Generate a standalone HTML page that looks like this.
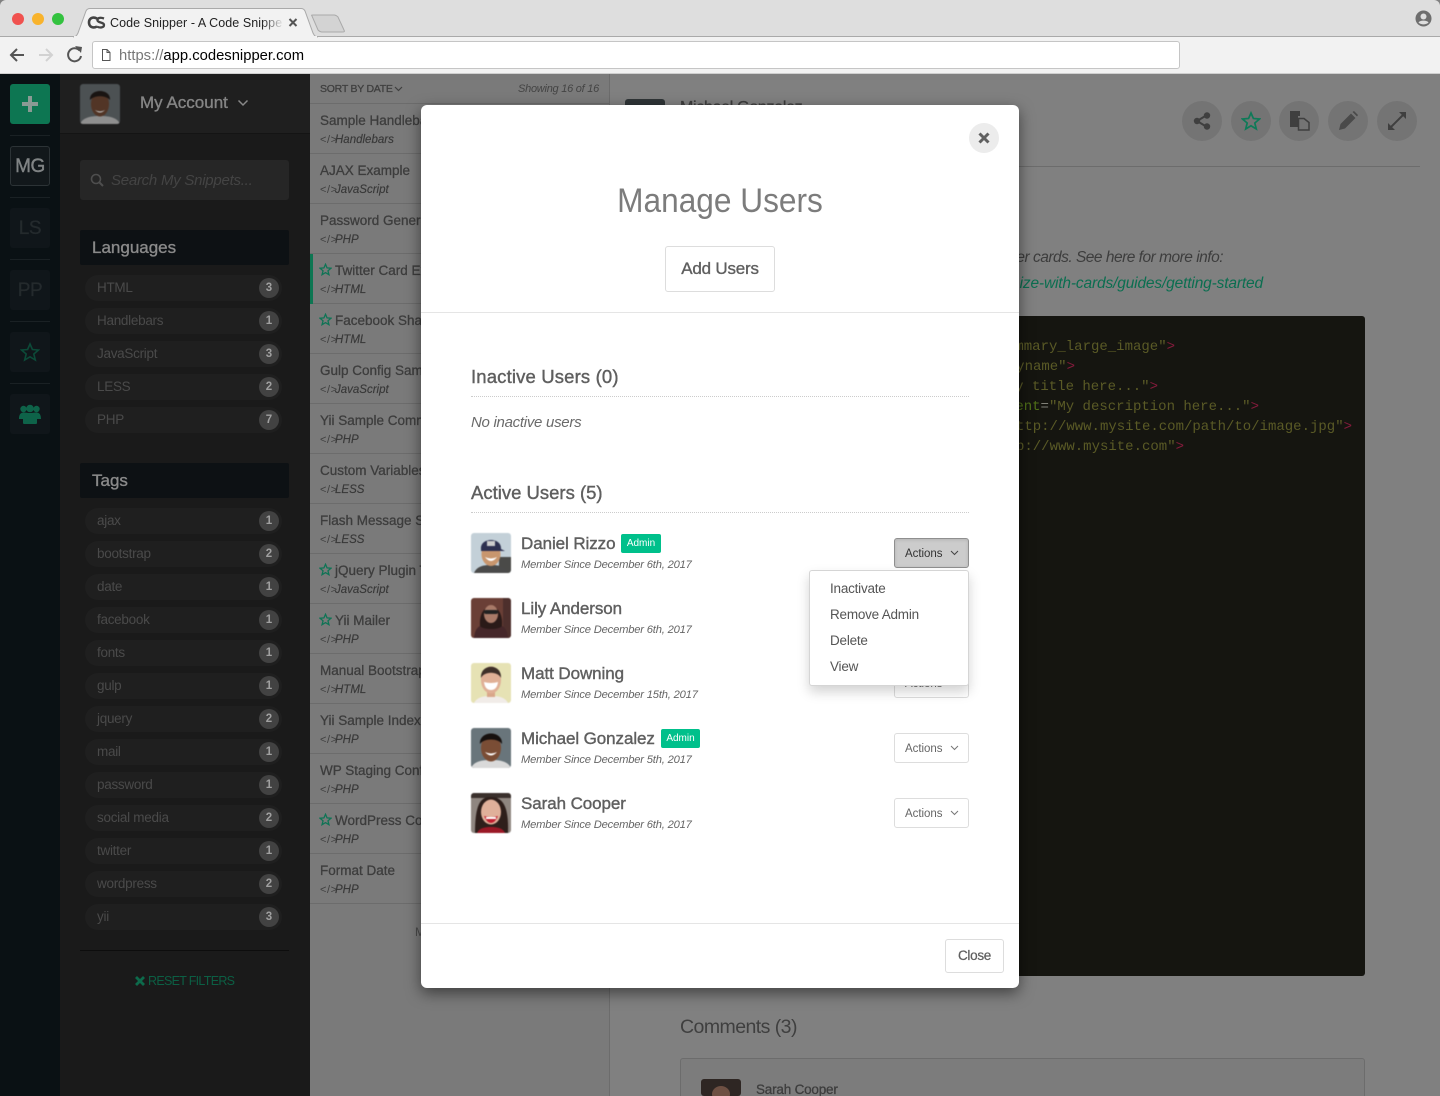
<!DOCTYPE html>
<html lang="en"><head><meta charset="utf-8"><title>Code Snipper</title>
<style>
*{box-sizing:border-box}
html,body{margin:0;padding:0;width:1440px;height:1096px;overflow:hidden;background:#808080}
body{position:relative;font-family:"Liberation Sans",sans-serif}
.a,.t{position:absolute}
.t{white-space:nowrap}
.pill{position:absolute;left:85px;margin-top:1px;width:197px;height:26px;border-radius:13px;background:#1f1f1f}
.pl{position:absolute;left:97px;margin-top:1px;font-size:13.500px;line-height:20px;color:#4a4a4a;white-space:nowrap;letter-spacing:-.28px}
.ct{position:absolute;left:259px;margin-top:1px;width:20px;height:20px;border-radius:50%;background:#424242;color:#a0a0a0;font-size:11.500px;font-weight:bold;line-height:20px;text-align:center}
.it{position:absolute;left:310px;width:300px;height:50px;border-bottom:1px solid #6c6c6c}
.it b{position:absolute;left:10px;top:8px;font-size:13.500px;line-height:18px;color:#3d3d3d;white-space:nowrap;font-weight:normal;-webkit-text-stroke:.3px #3d3d3d}
.it b.s{left:25px}
.it i{position:absolute;left:25px;top:28px;font-size:11.500px;line-height:16px;color:#383838;white-space:nowrap;-webkit-text-stroke:.15px #383838}
.it em{position:absolute;left:10px;top:28px;font-style:normal;font-size:11px;line-height:16px;color:#3f3f3f;letter-spacing:.6px}
.it svg{position:absolute;left:9px;top:9px}
.cb{position:absolute;width:40px;height:40px;border-radius:50%;background:#747474;top:101px}
.rb{position:absolute;left:10px;width:40px;height:40px;border-radius:3px;background:#10161a;text-align:center;font-size:19px;line-height:40px;color:#242a2d;letter-spacing:-.4px;-webkit-text-stroke:.3px #242a2d}
.rl{position:absolute;left:10px;width:40px;height:1px;background:#1a2124}
.code{position:absolute;right:0;font:14px/20px "Liberation Mono",monospace;color:#5a5a26;white-space:pre}
.code span{color:#851b3c}.code u{text-decoration:none;color:#507018}.code s{text-decoration:none;color:#808078}
.nm{position:absolute;left:521px;margin-top:1px;font-size:17px;line-height:24px;color:#5f5f5f;white-space:nowrap;letter-spacing:-.08px;-webkit-text-stroke:.4px #5f5f5f}
.sb{position:absolute;left:521px;margin-top:1px;font-size:11.200px;font-style:italic;line-height:16px;color:#666;white-space:nowrap;letter-spacing:-.19px}
.bd{position:absolute;height:19px;border-radius:2px;background:#00c08b;color:#fff;font-size:10px;line-height:19px;text-align:center}
.ac{position:absolute;left:894px;width:75px;height:30px;border:1px solid #ddd;border-radius:3px;background:#fff;color:#666;font-size:11.500px;line-height:30px;padding-left:10px;letter-spacing:-.03px}
.ac svg{position:absolute;left:55px;top:11px}
.av{position:absolute;left:471px;width:40px;height:40px;border-radius:3px;overflow:hidden;filter:blur(.5px)}
.mi{position:absolute;left:830px;font-size:13.500px;line-height:20px;color:#555;letter-spacing:-.22px}
</style></head><body>

<!-- browser chrome -->
<div class="a" style="left:0;top:0;width:1440px;height:37px;background:#dedede;border-radius:6px 6px 0 0"></div>
<div class="a" style="left:0;top:36px;width:1440px;height:1px;background:#a9a9a9"></div>
<div class="a" style="left:0;top:37px;width:1440px;height:36px;background:#f2f2f2"></div>
<div class="a" style="left:0;top:73px;width:1440px;height:1px;background:#cfcfcf"></div>
<div class="a" style="left:12px;top:13px;width:12px;height:12px;border-radius:50%;background:#f0524f"></div>
<div class="a" style="left:32px;top:13px;width:12px;height:12px;border-radius:50%;background:#f8b32c"></div>
<div class="a" style="left:52px;top:13px;width:12px;height:12px;border-radius:50%;background:#33c23f"></div>
<svg class="a" style="left:70px;top:6px" width="290" height="32" viewBox="0 0 290 32">
<path d="M3 31 C6 31 7 29 8 27 L16 5 C17 3 18 2.500 20 2.500 H231 C233 2.500 234 3 235 5 L243 27 C244 29 245 31 248 31" fill="#f2f2f2" stroke="#a9a9a9" stroke-width="1"/>
<rect x="4" y="30" width="243" height="2" fill="#f2f2f2"/>
<path d="M242 10 C241 9 242 9 243 9 H264 C266 9 267 10 268 11 L274 24 C275 26 274 26 272 26 H252 C250 26 249 25 248 24Z" fill="#d3d3d3" stroke="#a9a9a9"/>
<path d="M27 12.500 C22 10 19 13 19 16.500 C19 20 22 23 27 20.500" fill="none" stroke="#444" stroke-width="2.600"/>
<path d="M34 12.500 C30 11 27 12 27.500 14.500 C28 17 34 16 34 19 C34 22 29 22 27 20.500" fill="none" stroke="#444" stroke-width="2.300"/>
<path d="M219.500 13 L226.500 20 M226.500 13 L219.500 20" stroke="#555" stroke-width="2"/>
</svg>
<div class="t" style="left:110px;top:15px;font-size:12.500px;line-height:17px;color:#222;width:172px;overflow:hidden;letter-spacing:.07px">Code Snipper - A Code Snippet</div>
<div class="a" style="left:262px;top:14px;width:22px;height:17px;background:linear-gradient(90deg,rgba(242,242,242,0),#f2f2f2)"></div>
<svg class="a" style="left:8px;top:44px" width="80" height="22" viewBox="0 0 80 22">
<path d="M16 11 H3 M9 5 L3 11 L9 17" fill="none" stroke="#555" stroke-width="2"/>
<path d="M31 11 H44 M38 5 L44 11 L38 17" fill="none" stroke="#d2d2d2" stroke-width="2"/>
<path d="M71.500 6.500 A6.500 6.500 0 1 0 73 12" fill="none" stroke="#555" stroke-width="2"/><path d="M67 2 L74 3 L73 9Z" fill="#555" />
</svg>
<div class="a" style="left:92px;top:41px;width:1088px;height:28px;background:#fff;border:1px solid #c5c5c5;border-radius:3px"></div>
<svg class="a" style="left:100px;top:48px" width="12" height="14" viewBox="0 0 12 14"><path d="M2.500 1.500 H7 L10 4.500 V12.500 H2.500Z M7 1.500 V4.500 H10" fill="#fff" stroke="#555" stroke-width="1"/></svg>
<div class="t" style="left:119px;top:47px;font-size:14.800px;line-height:18px;color:#000"><span style="color:#777">https://</span>app.codesnipper.com</div>
<svg class="a" style="left:1415px;top:10px" width="17" height="17" viewBox="0 0 17 17"><circle cx="8.500" cy="8.500" r="8" fill="#6e6e6e"/><circle cx="8.500" cy="6.500" r="3" fill="#dedede"/><path d="M3.500 12.500 C5 10 12 10 13.500 12.500 C11 15 6 15 3.500 12.500Z" fill="#dedede"/></svg>

<!-- left rail -->
<div class="a" style="left:0;top:74px;width:60px;height:1022px;background:#0a1114"></div>
<div class="a" style="left:10px;top:84px;width:40px;height:40px;border-radius:3px;background:#0d7652"></div>
<svg class="a" style="left:22px;top:96px" width="16" height="16"><path d="M0 6 H6 V0 H10 V6 H16 V10 H10 V16 H6 V10 H0Z" fill="#8a9a94"/></svg>
<div class="rl" style="top:135px"></div><div class="rl" style="top:197px"></div><div class="rl" style="top:259px"></div><div class="rl" style="top:321px"></div><div class="rl" style="top:383px"></div>
<div class="rb" style="top:146px;background:#12181b;border:1px solid #2c3336;line-height:39px;color:#808485;-webkit-text-stroke:.4px #808485">MG</div>
<div class="rb" style="top:208px;line-height:41px">LS</div>
<div class="rb" style="top:270px;line-height:41px">PP</div>
<div class="rb" style="top:332px"></div>
<svg class="a" style="left:20px;top:342px" width="20" height="20" viewBox="0 0 20 20"><path d="M10 2 L12.400 7.500 L18.500 8 L13.800 12 L15.300 18 L10 14.800 L4.700 18 L6.200 12 L1.500 8 L7.600 7.500Z" fill="none" stroke="#0c4a38" stroke-width="1.600"/></svg>
<div class="rb" style="top:394px"></div>
<svg class="a" style="left:19px;top:404px" width="22" height="20" viewBox="0 0 22 20"><g fill="#0e6349"><circle cx="4.500" cy="5" r="3.200"/><circle cx="17.500" cy="5" r="3.200"/><circle cx="11" cy="4.500" r="3.800"/><path d="M0 15 C0 9 3 8.500 5 8.500 C7 8.500 8 9 11 9 C14 9 15 8.500 17 8.500 C19 8.500 22 9 22 15 H18 V19 C18 20 17 20 16 20 H6 C5 20 4 20 4 19 V15Z"/></g></svg>

<!-- sidebar -->
<div class="a" style="left:60px;top:74px;width:250px;height:1022px;background:#1a1a1a"></div>
<div class="a" style="left:60px;top:74px;width:250px;height:60px;background:#1f1f1f;border-bottom:1px solid #141414"></div>
<svg class="a" style="left:80px;top:84px;border-radius:3px;filter:blur(.5px)" width="40" height="40" viewBox="0 0 40 40"><rect width="40" height="40" fill="#4c5153"/><path d="M0 40 C3 33 12 32 20 32 C28 32 37 33 40 40Z" fill="#8f8f8f"/><ellipse cx="20" cy="20" rx="9" ry="12.500" fill="#523526"/><path d="M10 16 C9 4 31 4 30 16 C26 11 14 11 10 16Z" fill="#191412"/><path d="M15 26 Q20 29 25 26 Q20 31 15 26Z" fill="#ccc"/></svg>
<div class="t" style="left:140px;top:92px;font-size:17px;line-height:22px;color:#858585;-webkit-text-stroke:.35px #858585">My Account</div>
<svg class="a" style="left:237px;top:99px" width="12" height="8"><path d="M1.500 1.500 L6 6 L10.500 1.500" fill="none" stroke="#888" stroke-width="1.500"/></svg>
<div class="a" style="left:80px;top:160px;width:209px;height:40px;border-radius:3px;background:#262626"></div>
<svg class="a" style="left:90px;top:173px" width="14" height="14"><circle cx="6" cy="6" r="4.500" fill="none" stroke="#4e4e4e" stroke-width="1.600"/><path d="M9.500 9.500 L13 13" stroke="#4e4e4e" stroke-width="2"/></svg>
<div class="t" style="left:111px;top:171px;font-size:15px;line-height:20px;font-style:italic;color:#444;letter-spacing:-.25px">Search My Snippets...</div>
<div class="a" style="left:80px;top:230px;width:209px;height:35px;border-radius:2px;background:#0d1114"></div>
<div class="t" style="left:92px;top:236px;font-size:17px;line-height:23px;color:#8a8a8a;-webkit-text-stroke:.35px #8a8a8a">Languages</div>
<div class="a" style="left:80px;top:463px;width:209px;height:35px;border-radius:2px;background:#0d1114"></div>
<div class="t" style="left:92px;top:469px;font-size:17px;line-height:23px;color:#8a8a8a;-webkit-text-stroke:.35px #8a8a8a">Tags</div>

<div class="pill" style="top:274px"></div><div class="pl" style="top:277px">HTML</div><div class="ct" style="top:277px">3</div>
<div class="pill" style="top:307px"></div><div class="pl" style="top:310px">Handlebars</div><div class="ct" style="top:310px">1</div>
<div class="pill" style="top:340px"></div><div class="pl" style="top:343px">JavaScript</div><div class="ct" style="top:343px">3</div>
<div class="pill" style="top:373px"></div><div class="pl" style="top:376px">LESS</div><div class="ct" style="top:376px">2</div>
<div class="pill" style="top:406px"></div><div class="pl" style="top:409px">PHP</div><div class="ct" style="top:409px">7</div>

<div class="pill" style="top:507px"></div><div class="pl" style="top:510px">ajax</div><div class="ct" style="top:510px">1</div>
<div class="pill" style="top:540px"></div><div class="pl" style="top:543px">bootstrap</div><div class="ct" style="top:543px">2</div>
<div class="pill" style="top:573px"></div><div class="pl" style="top:576px">date</div><div class="ct" style="top:576px">1</div>
<div class="pill" style="top:606px"></div><div class="pl" style="top:609px">facebook</div><div class="ct" style="top:609px">1</div>
<div class="pill" style="top:639px"></div><div class="pl" style="top:642px">fonts</div><div class="ct" style="top:642px">1</div>
<div class="pill" style="top:672px"></div><div class="pl" style="top:675px">gulp</div><div class="ct" style="top:675px">1</div>
<div class="pill" style="top:705px"></div><div class="pl" style="top:708px">jquery</div><div class="ct" style="top:708px">2</div>
<div class="pill" style="top:738px"></div><div class="pl" style="top:741px">mail</div><div class="ct" style="top:741px">1</div>
<div class="pill" style="top:771px"></div><div class="pl" style="top:774px">password</div><div class="ct" style="top:774px">1</div>
<div class="pill" style="top:804px"></div><div class="pl" style="top:807px">social media</div><div class="ct" style="top:807px">2</div>
<div class="pill" style="top:837px"></div><div class="pl" style="top:840px">twitter</div><div class="ct" style="top:840px">1</div>
<div class="pill" style="top:870px"></div><div class="pl" style="top:873px">wordpress</div><div class="ct" style="top:873px">2</div>
<div class="pill" style="top:903px"></div><div class="pl" style="top:906px">yii</div><div class="ct" style="top:906px">3</div>

<div class="a" style="left:80px;top:950px;width:209px;height:1px;background:#0d0d0d"></div>
<svg class="a" style="left:135px;top:976px" width="10" height="10"><path d="M1 1 L9 9 M9 1 L1 9" stroke="#0d6a4b" stroke-width="2.800"/></svg>
<div class="t" style="left:148px;top:973px;font-size:12.500px;line-height:17px;color:#0c5f44;letter-spacing:-.7px">RESET FILTERS</div>

<!-- snippet list -->
<div class="a" style="left:310px;top:74px;width:300px;height:1022px;background:#7a7a7a;border-right:1px solid #6c6c6c"></div>
<div class="a" style="left:310px;top:74px;width:300px;height:30px;border-bottom:1px solid #6c6c6c"></div>
<div class="t" style="left:320px;top:82px;font-size:10.500px;line-height:15px;color:#3f3f3f;-webkit-text-stroke:.3px #3f3f3f;letter-spacing:-.25px">SORT BY DATE</div>
<svg class="a" style="left:394px;top:86px" width="9" height="6"><path d="M1 1 L4.500 4.500 L8 1" fill="none" stroke="#3f3f3f" stroke-width="1.200"/></svg>
<div class="t" style="right:841px;top:82px;font-size:11px;line-height:15px;font-style:italic;color:#444;letter-spacing:-.25px">Showing 16 of 16</div>

<div class="it" style="top:104px"><b>Sample Handlebars</b><em>&lt;/&gt;</em><i>Handlebars</i></div>
<div class="it" style="top:154px"><b>AJAX Example</b><em>&lt;/&gt;</em><i>JavaScript</i></div>
<div class="it" style="top:204px"><b>Password Generator</b><em>&lt;/&gt;</em><i>PHP</i></div>
<div class="it" style="top:254px"><svg width="13" height="13" viewBox="0 0 20 20"><path d="M10 2 L12.400 7.500 L18.500 8 L13.800 12 L15.300 18 L10 14.800 L4.700 18 L6.200 12 L1.500 8 L7.600 7.500Z" fill="none" stroke="#0e7455" stroke-width="2"/></svg><b class="s">Twitter Card Example</b><em>&lt;/&gt;</em><i>HTML</i></div>
<div class="a" style="left:310px;top:254px;width:3px;height:50px;background:#0d7652"></div>
<div class="it" style="top:304px"><svg width="13" height="13" viewBox="0 0 20 20"><path d="M10 2 L12.400 7.500 L18.500 8 L13.800 12 L15.300 18 L10 14.800 L4.700 18 L6.200 12 L1.500 8 L7.600 7.500Z" fill="none" stroke="#0e7455" stroke-width="2"/></svg><b class="s">Facebook Share</b><em>&lt;/&gt;</em><i>HTML</i></div>
<div class="it" style="top:354px"><b>Gulp Config Sample</b><em>&lt;/&gt;</em><i>JavaScript</i></div>
<div class="it" style="top:404px"><b>Yii Sample Command</b><em>&lt;/&gt;</em><i>PHP</i></div>
<div class="it" style="top:454px"><b>Custom Variables</b><em>&lt;/&gt;</em><i>LESS</i></div>
<div class="it" style="top:504px"><b>Flash Message Styles</b><em>&lt;/&gt;</em><i>LESS</i></div>
<div class="it" style="top:554px"><svg width="13" height="13" viewBox="0 0 20 20"><path d="M10 2 L12.400 7.500 L18.500 8 L13.800 12 L15.300 18 L10 14.800 L4.700 18 L6.200 12 L1.500 8 L7.600 7.500Z" fill="none" stroke="#0e7455" stroke-width="2"/></svg><b class="s">jQuery Plugin Template</b><em>&lt;/&gt;</em><i>JavaScript</i></div>
<div class="it" style="top:604px"><svg width="13" height="13" viewBox="0 0 20 20"><path d="M10 2 L12.400 7.500 L18.500 8 L13.800 12 L15.300 18 L10 14.800 L4.700 18 L6.200 12 L1.500 8 L7.600 7.500Z" fill="none" stroke="#0e7455" stroke-width="2"/></svg><b class="s">Yii Mailer</b><em>&lt;/&gt;</em><i>PHP</i></div>
<div class="it" style="top:654px"><b>Manual Bootstrap</b><em>&lt;/&gt;</em><i>HTML</i></div>
<div class="it" style="top:704px"><b>Yii Sample Index</b><em>&lt;/&gt;</em><i>PHP</i></div>
<div class="it" style="top:754px"><b>WP Staging Config</b><em>&lt;/&gt;</em><i>PHP</i></div>
<div class="it" style="top:804px"><svg width="13" height="13" viewBox="0 0 20 20"><path d="M10 2 L12.400 7.500 L18.500 8 L13.800 12 L15.300 18 L10 14.800 L4.700 18 L6.200 12 L1.500 8 L7.600 7.500Z" fill="none" stroke="#0e7455" stroke-width="2"/></svg><b class="s">WordPress Config</b><em>&lt;/&gt;</em><i>PHP</i></div>
<div class="it" style="top:854px"><b>Format Date</b><em>&lt;/&gt;</em><i>PHP</i></div>
<div class="t" style="left:415px;top:925px;font-size:12px;line-height:15px;color:#4a4a4a">More</div>

<!-- main -->
<div class="a" style="left:625px;top:99px;width:40px;height:20px;background:#2f3537;border-radius:3px"></div>
<div class="t" style="left:680px;top:96px;font-size:16px;line-height:24px;color:#3d3d3d;letter-spacing:-.3px;-webkit-text-stroke:.3px #3d3d3d">Michael Gonzalez</div>
<div class="cb" style="left:1182px"></div><div class="cb" style="left:1231px"></div><div class="cb" style="left:1279px"></div><div class="cb" style="left:1328px"></div><div class="cb" style="left:1377px"></div>
<svg class="a" style="left:1192px;top:111px" width="20" height="20" viewBox="0 0 20 20"><path d="M15 4 L5 10 L15 16" fill="none" stroke="#3f3f3f" stroke-width="2"/><circle cx="15" cy="4.500" r="3.200" fill="#3f3f3f"/><circle cx="5" cy="10" r="3.200" fill="#3f3f3f"/><circle cx="15" cy="15.500" r="3.200" fill="#3f3f3f"/></svg>
<svg class="a" style="left:1241px;top:111px" width="20" height="20" viewBox="0 0 20 20"><path d="M10 2 L12.400 7.500 L18.500 8 L13.800 12 L15.300 18 L10 14.800 L4.700 18 L6.200 12 L1.500 8 L7.600 7.500Z" fill="none" stroke="#0e7a58" stroke-width="1.700"/></svg>
<svg class="a" style="left:1289px;top:110px" width="21" height="21" viewBox="0 0 21 21"><path d="M1 1 H11 V6 H9 V17 H1Z" fill="#3f3f3f"/><path d="M9.500 8.500 H15 L20 12.500 V20 H9.500Z" fill="none" stroke="#3f3f3f" stroke-width="1.500"/></svg>
<svg class="a" style="left:1338px;top:111px" width="20" height="20" viewBox="0 0 20 20"><path d="M1 19 L2.500 13 L13 2.500 L17.500 7 L7 17.500Z" fill="#4a4a4a"/><path d="M14.500 1 L16 0 L20 4 L19 5.500Z" fill="#4a4a4a"/></svg>
<svg class="a" style="left:1387px;top:111px" width="20" height="20" viewBox="0 0 20 20"><path d="M3 17 L17 3" stroke="#3f3f3f" stroke-width="2"/><path d="M12 1 H19 V8Z M1 12 V19 H8Z" fill="#3f3f3f"/></svg>
<div class="a" style="left:625px;top:166px;width:795px;height:1px;background:#6c6c6c"></div>
<div class="t" style="right:217px;top:248px;font-size:15.500px;line-height:20px;font-style:italic;color:#3d3d3d;letter-spacing:-.5px">Twitter cards. See here for more info:</div>
<div class="t" style="right:177px;top:274px;font-size:15.500px;line-height:20px;font-style:italic;color:#0b6e50;letter-spacing:-.15px">developer.twitter.com/en/docs/tweets/optimize-with-cards/guides/getting-started</div>
<div class="a" style="left:900px;top:316px;width:465px;height:660px;background:#151510;border-radius:3px"></div>
<div class="code" style="right:265px;top:337px">&lt;meta name="twitter:card" content="summary_large_image"<span>&gt;</span></div>
<div class="code" style="right:365px;top:357px">&lt;meta name="twitter:site" content="@myname"<span>&gt;</span></div>
<div class="code" style="right:282px;top:377px">&lt;meta name="twitter:title" content="My title here..."<span>&gt;</span></div>
<div class="code" style="right:181px;top:397px">&lt;meta name="description" cont<u>ent</u><s>=</s>"My description here..."<span>&gt;</span></div>
<div class="code" style="right:88px;top:417px">&lt;meta name="image" content="http://www.mysite.com/path/to/image.jpg"<span>&gt;</span></div>
<div class="code" style="right:256px;top:437px">&lt;meta name="url" content="http://www.mysite.com"<span>&gt;</span></div>
<div class="t" style="left:680px;top:1015px;font-size:19.500px;line-height:25px;color:#3f3f3f;letter-spacing:-.55px">Comments (3)</div>
<div class="a" style="left:680px;top:1058px;width:685px;height:60px;border:1px solid #6c6c6c;border-radius:3px;background:#7c7c7c"></div>
<svg class="a" style="left:701px;top:1079px;border-radius:3px" width="40" height="17" viewBox="0 0 40 17"><rect width="40" height="17" fill="#2e2623"/><ellipse cx="20" cy="15" rx="9" ry="8" fill="#6e5043"/></svg>
<div class="t" style="left:756px;top:1081px;font-size:13.500px;line-height:17px;color:#3d3d3d;-webkit-text-stroke:.3px #3d3d3d;letter-spacing:-.2px">Sarah Cooper</div>

<!-- modal -->
<div class="a" style="left:421px;top:105px;width:598px;height:883px;background:#fff;border-radius:6px;box-shadow:0 5px 15px rgba(0,0,0,.5)"></div>
<div class="a" style="left:969px;top:123px;width:30px;height:30px;border-radius:50%;background:#ececec"></div>
<svg class="a" style="left:978px;top:132px" width="12" height="12"><path d="M1.500 1.500 L10.500 10.500 M10.500 1.500 L1.500 10.500" stroke="#606060" stroke-width="3"/></svg>
<div class="t" style="left:421px;width:598px;text-align:center;top:181px;font-size:34px;line-height:40px;color:#7c7c7c;transform:scaleX(.93)">Manage Users</div>
<div class="a" style="left:665px;top:246px;width:110px;height:46px;border:1px solid #ddd;border-radius:3px;text-align:center;font-size:17px;line-height:44px;color:#5f5f5f;-webkit-text-stroke:.35px #5f5f5f;letter-spacing:-.2px">Add Users</div>
<div class="a" style="left:421px;top:312px;width:598px;height:1px;background:#e5e5e5"></div>
<div class="t" style="left:471px;top:365px;font-size:18.500px;line-height:24px;color:#5f5f5f;-webkit-text-stroke:.4px #5f5f5f;letter-spacing:.15px">Inactive Users (0)</div>
<div class="a" style="left:471px;top:396px;width:498px;border-top:1px dotted #ccc"></div>
<div class="t" style="left:471px;top:413px;font-size:15px;line-height:20px;font-style:italic;color:#6a6a6a;letter-spacing:-.28px">No inactive users</div>
<div class="t" style="left:471px;top:481px;font-size:18.500px;line-height:24px;color:#5f5f5f;-webkit-text-stroke:.4px #5f5f5f">Active Users (5)</div>
<div class="a" style="left:471px;top:512px;width:498px;border-top:1px dotted #ccc"></div>

<!-- users -->
<svg class="av" style="top:533px" viewBox="0 0 40 40"><rect width="40" height="40" fill="#c3d0d8"/><rect y="24" x="28" width="12" height="16" fill="#4a4a48"/><path d="M3 40 C6 33 13 32 20 32 C27 32 34 33 37 40Z" fill="#4a4a4a"/><ellipse cx="20" cy="21" rx="9.500" ry="12" fill="#c8966e"/><path d="M10 16 C9 4 31 4 30 16 L34 18 H10Z" fill="#2d3050"/><rect x="16" y="8" width="8" height="5" fill="#ccc"/><path d="M14 24 Q20 27 26 24 Q20 32 14 24Z" fill="#fff"/></svg>
<svg class="av" style="top:598px" viewBox="0 0 40 40"><rect width="40" height="40" fill="#6a3f36"/><rect x="32" width="8" height="40" fill="#4d2f2c"/><path d="M3 40 C4 28 10 26 20 26 C30 26 36 28 37 40Z" fill="#45272a"/><path d="M9 28 C7 2 33 2 31 28 C28 32 12 32 9 28Z" fill="#2a1a18"/><ellipse cx="20" cy="16" rx="7" ry="9" fill="#a87a68"/><rect x="13" y="12" width="14" height="4" rx="2" fill="#222"/></svg>
<svg class="av" style="top:663px" viewBox="0 0 40 40"><rect width="40" height="40" fill="#e6e2b4"/><path d="M3 40 C6 34 13 33 20 33 C27 33 34 34 37 40Z" fill="#f1ece8"/><rect x="16" y="26" width="8" height="8" fill="#d9a78a"/><ellipse cx="20" cy="17" rx="10" ry="13.500" fill="#e0b096"/><path d="M10 15 C9 0 31 0 30 15 C27 8 13 8 10 15Z" fill="#3f3029"/><path d="M13 19 Q20 21 27 19 Q26 27 20 27 Q14 27 13 19Z" fill="#fff"/></svg>
<svg class="av" style="top:728px" viewBox="0 0 40 40"><rect width="40" height="40" fill="#69757b"/><path d="M0 40 C3 33 12 32 20 32 C28 32 37 33 40 40Z" fill="#d9d9d9"/><ellipse cx="20" cy="20" rx="10" ry="13.500" fill="#7a4d35"/><path d="M9 16 C8 2 32 2 31 16 C27 10 13 10 9 16Z" fill="#17110f"/><path d="M14 24 Q20 27 26 24 Q20 31 14 24Z" fill="#fff"/></svg>
<svg class="av" style="top:793px" viewBox="0 0 40 40"><rect width="40" height="40" fill="#8f8680"/><rect width="40" height="5" fill="#3a302c"/><path d="M4 40 C4 8 11 4 20 4 C31 4 38 12 37 40Z" fill="#2e1f1b"/><path d="M6 40 C8 35 14 34 20 34 C26 34 32 35 34 40Z" fill="#9a1826"/><ellipse cx="20" cy="19" rx="10" ry="12.500" fill="#e0b09a"/><path d="M13 23 Q20 25 27 23 Q24 30 20 30 Q16 30 13 23Z" fill="#c21f30"/><path d="M15 24 H25 V26 H15Z" fill="#fff"/></svg>

<div class="nm" style="top:531px">Daniel Rizzo</div><div class="bd" style="left:621px;top:534px;width:40px">Admin</div>
<div class="sb" style="top:556px">Member Since December 6th, 2017</div>
<div class="nm" style="top:596px">Lily Anderson</div>
<div class="sb" style="top:621px">Member Since December 6th, 2017</div>
<div class="nm" style="top:661px">Matt Downing</div>
<div class="sb" style="top:686px">Member Since December 15th, 2017</div>
<div class="nm" style="top:726px">Michael Gonzalez</div><div class="bd" style="left:661px;top:729px;width:39px">Admin</div>
<div class="sb" style="top:751px">Member Since December 5th, 2017</div>
<div class="nm" style="top:791px">Sarah Cooper</div>
<div class="sb" style="top:816px">Member Since December 6th, 2017</div>

<div class="ac" style="top:538px;background:#ccc;border-color:#8f8f8f;color:#333;box-shadow:inset 0 1px 3px rgba(0,0,0,.12)">Actions<svg width="9" height="6"><path d="M1 1 L4.500 4.500 L8 1" fill="none" stroke="#444" stroke-width="1"/></svg></div>
<div class="ac" style="top:603px">Actions</div>
<div class="ac" style="top:668px">Actions</div>
<div class="ac" style="top:733px">Actions<svg width="9" height="6"><path d="M1 1 L4.500 4.500 L8 1" fill="none" stroke="#777" stroke-width="1"/></svg></div>
<div class="ac" style="top:798px">Actions<svg width="9" height="6"><path d="M1 1 L4.500 4.500 L8 1" fill="none" stroke="#777" stroke-width="1"/></svg></div>

<div class="a" style="left:809px;top:570px;width:160px;height:116px;background:#fff;border:1px solid #d5d5d5;border-radius:3px;box-shadow:0 6px 12px rgba(0,0,0,.175)"></div>
<div class="mi" style="top:579px">Inactivate</div>
<div class="mi" style="top:605px">Remove Admin</div>
<div class="mi" style="top:631px">Delete</div>
<div class="mi" style="top:657px">View</div>

<div class="a" style="left:421px;top:923px;width:598px;height:1px;background:#e5e5e5"></div>
<div class="a" style="left:945px;top:939px;width:59px;height:34px;border:1px solid #ddd;border-radius:3px;text-align:center;font-size:13.500px;line-height:31px;color:#5f5f5f;-webkit-text-stroke:.25px #5f5f5f;letter-spacing:-.3px">Close</div>
</body></html>
